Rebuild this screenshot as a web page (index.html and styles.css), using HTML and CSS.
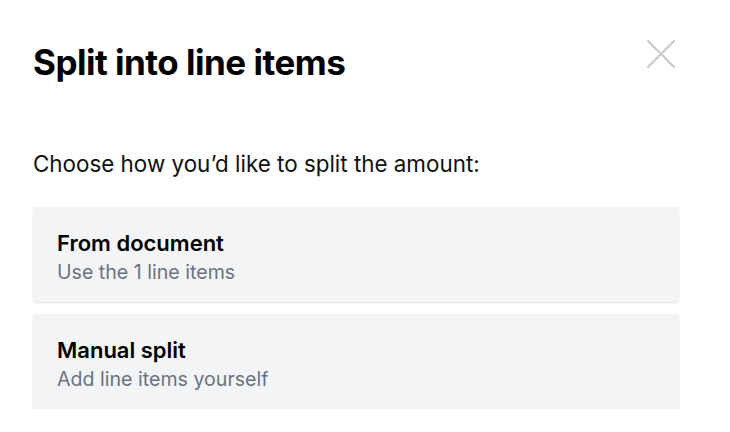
FILE: index.html
```html
<!DOCTYPE html>
<html>
<head>
<meta charset="utf-8">
<link rel="stylesheet" href="styles.css">
</head>
<body>
<div class="dialog">
  <div class="header">
    <h1 class="title">Split into line items</h1>
    <button class="close" aria-label="Close">
      <svg width="30" height="30" viewBox="0 0 30 30"><path d="M2 2 L28 28 M28 2 L2 28" stroke="#c8cbd0" stroke-width="2.2" stroke-linecap="round" fill="none"/></svg>
    </button>
  </div>
  <p class="prompt">Choose how you’d like to split the amount:</p>
  <div class="options">
    <div class="option">
      <div class="opt-title">From document</div>
      <div class="opt-sub">Use the 1 line items</div>
    </div>
    <div class="option">
      <div class="opt-title">Manual split</div>
      <div class="opt-sub">Add line items yourself</div>
    </div>
  </div>
</div>
</body>
</html>
```
FILE: styles.css
```css
* { box-sizing: border-box; }
html, body { margin: 0; padding: 0; background: #fff; }
body { font-family: Inter, "Noto Sans", sans-serif; color: #000; }
.dialog { padding: 40px 51px 0 33px; }
.header { display: flex; justify-content: space-between; align-items: flex-start; }
.title { margin: 0; font-size: 35px; font-weight: 700; letter-spacing: -0.5px; line-height: 44px; }
.close { border: 0; background: none; padding: 0; margin: -1px 3px 0 0; width: 30px; height: 30px; }
.close svg { display: block; }
.prompt { margin: 67px 0 0; font-size: 22.4px; line-height: 26px; color: #111; }
.options { display: flex; flex-direction: column; gap: 12px; margin-top: 30px; }
.option { background: #f3f4f6; border-radius: 4px; box-shadow: 0 1px 2px rgba(0,0,0,0.12); padding: 23px 24px 0; height: 95px; }
.opt-title { font-size: 22px; font-weight: 600; line-height: 26px; }
.opt-sub { font-size: 19.6px; line-height: 24px; color: #6b7280; margin-top: 4px; }
```
